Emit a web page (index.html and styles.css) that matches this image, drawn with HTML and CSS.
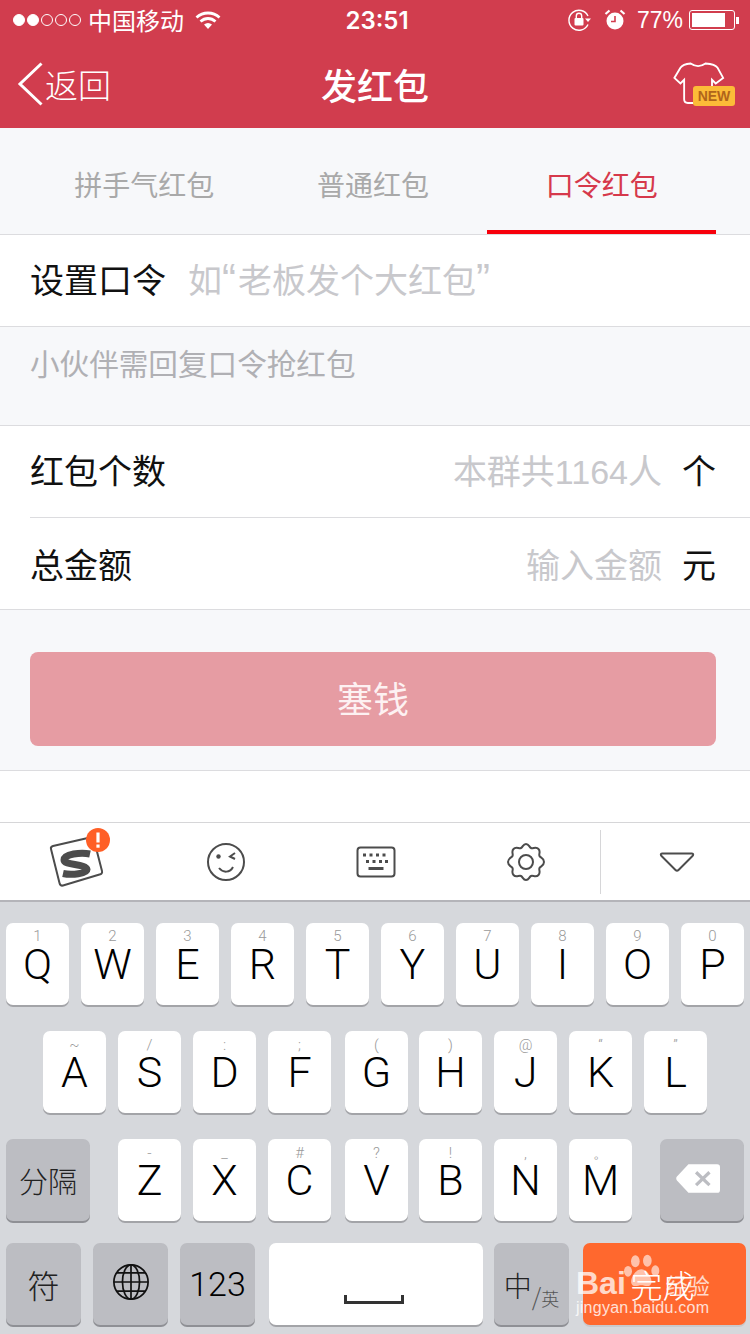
FILE: index.html
```html
<!DOCTYPE html>
<html>
<head>
    <meta charset="utf-8">
    <title>发红包</title>
    <link rel="stylesheet" href="styles.css">
</head>
<body>
<div id="phone">

    <div class="header">
        <div class="status">
            <div class="status-left">
                <span class="dot on"></span><span class="dot on"></span><span class="dot"></span><span class="dot"></span><span class="dot"></span>
                <span class="carrier">中国移动</span>
                <svg class="wifi" width="26" height="20" viewBox="0 0 26 20"><path d="M1.500 7.500C8 1.500 18 1.500 24.500 7.500" fill="none" stroke="#fff" stroke-width="2.800"/><path d="M5.500 11.500C10 7.500 16 7.500 20.500 11.500" fill="none" stroke="#fff" stroke-width="2.800"/><path d="M9 14.500C11.500 12.500 14.500 12.500 17 14.500L13 19Z" fill="#fff"/></svg>
            </div>
            <div class="clock">23:51</div>
            <div class="status-right">
                <svg width="24" height="22" viewBox="0 0 24 22"><path d="M20 15.500A10 10 0 1 1 20 7" fill="none" stroke="#fff" stroke-width="1.400"/><path d="M17 9.500h6l-3 3.500z" fill="#fff"/><rect x="6.500" y="9" width="9" height="7.500" rx="1" fill="#fff"/><path d="M8.300 9V7a2.700 2.700 0 0 1 5.400 0v2" fill="none" stroke="#fff" stroke-width="1.400"/></svg>
                <svg class="alarm" width="22" height="22" viewBox="0 0 22 22"><circle cx="11" cy="12" r="8.500" fill="#fff"/><path d="M11 7v5.500H7" fill="none" stroke="#d13d4e" stroke-width="1.600"/><path d="M1.500 5L5.500 1.500M20.500 5L16.500 1.500" stroke="#fff" stroke-width="2.200"/></svg>
                <span class="percent">77%</span>
                <div class="battery"><div class="battery-fill"></div></div>
                <div class="battery-tip"></div>
            </div>
        </div>
        <div class="nav">
            <div class="back">
                <svg width="28" height="44" viewBox="0 0 28 44"><path d="M24.500 1.500L3 22l21.500 20.500" fill="none" stroke="#fff" stroke-width="3"/></svg>
                <span>返回</span>
            </div>
            <div class="nav-title">发红包</div>
            <div class="skin">
                <svg class="shirt" width="52" height="43" viewBox="0 0 56 46"><path d="M19 1.500C24 5 30 5 35 1.500C41 2 46 3 48 6L54 17L46 23L42 19V44H16C13 44 12 43 12 40V19L8 23L1.500 17L8 6C10 3 14 2 19 1.500Z" fill="none" stroke="#fff" stroke-width="2"/></svg>
                <span class="new-tag">NEW</span>
            </div>
        </div>
    </div>

    <div class="tabs">
        <div class="tab">拼手气红包</div>
        <div class="tab">普通红包</div>
        <div class="tab active">口令红包</div>
    </div>

    <div class="row">
        <span class="row-label">设置口令</span>
        <span class="ph">如<span class="q">“</span>老板发个大红包<span class="q">”</span></span>
    </div>
    <div class="hint">小伙伴需回复口令抢红包</div>

    <div class="group">
        <div class="row inner">
            <span class="row-label">红包个数</span>
            <span class="ph right">本群共1164人</span>
            <span class="unit">个</span>
        </div>
        <div class="row last">
            <span class="row-label">总金额</span>
            <span class="ph right">输入金额</span>
            <span class="unit">元</span>
        </div>
    </div>

    <div class="btn-area"><div class="btn">塞钱</div></div>
    <div class="blank"></div>

    <div class="toolbar">
        <div class="tool tool-logo">
            <svg width="64" height="60" viewBox="0 0 64 60"><path d="M4 19L41 10.500C43 10 44.500 11 45 13L53 44C53.500 46 52.500 47 50.500 47.500L14 58.500C12 59 11 58 10.500 56L2 22C1.500 20.500 2.500 19.500 4 19Z" fill="#fff" stroke="#4c4c4c" stroke-width="2"/><path d="M41 27C32 25 15 27 15 33C15 38.500 37 36.500 38 42.500C38 46.500 23 48.500 14 46.500" fill="none" stroke="#4c4c4c" stroke-width="7"/><circle cx="49" cy="13" r="12" fill="#ff5f26"/><rect x="47.400" y="5.500" width="3.200" height="10" fill="#fff"/><rect x="47.400" y="17.500" width="3.200" height="3.200" fill="#fff"/></svg>
        </div>
        <div class="tool">
            <svg width="40" height="40" viewBox="0 0 40 40"><circle cx="20" cy="20" r="18" fill="none" stroke="#4c4c4c" stroke-width="2"/><circle cx="12.500" cy="14.500" r="2.200" fill="#4c4c4c"/><path d="M29 11L24 14.500L29 17" fill="none" stroke="#4c4c4c" stroke-width="2"/><path d="M13 26C17 31 24 31 27 25" fill="none" stroke="#4c4c4c" stroke-width="2"/></svg>
        </div>
        <div class="tool">
            <svg width="40" height="32" viewBox="0 0 40 32"><rect x="1.500" y="1.500" width="37" height="29" rx="3" fill="none" stroke="#4c4c4c" stroke-width="2"/><path d="M7 9h3M13.500 9h3M20 9h3M26.500 9h3M10 15.500h3M16.500 15.500h3M23 15.500h3M29 15.500h3" stroke="#4c4c4c" stroke-width="3"/><path d="M12.500 22.500h15" stroke="#4c4c4c" stroke-width="3"/></svg>
        </div>
        <div class="tool">
            <svg width="40" height="40" viewBox="0 0 40 40"><path d="M20 2C23 2 23 5 25 6C27 7 30 4 32.500 7C35 9.500 32.500 12 33.500 14C34.500 16 38 16 38 20C38 24 34.500 24 33.500 26C32.500 28 35 30.500 32.500 33C30 36 27 33 25 34C23 35 23 38 20 38C17 38 17 35 15 34C13 33 10 36 7.500 33C5 30.500 7.500 28 6.500 26C5.500 24 2 24 2 20C2 16 5.500 16 6.500 14C7.500 12 5 9.500 7.500 7C10 4 13 7 15 6C17 5 17 2 20 2Z" fill="none" stroke="#4c4c4c" stroke-width="2"/><circle cx="20" cy="20" r="7" fill="none" stroke="#4c4c4c" stroke-width="2"/></svg>
        </div>
        <div class="tool tool-last">
            <svg width="36" height="22" viewBox="0 0 36 22"><path d="M3 2.500H33C34.500 2.500 34.500 4 33.500 5L19.500 19C18.500 20 17.500 20 16.500 19L2.500 5C1.500 4 1.500 2.500 3 2.500Z" fill="none" stroke="#4c4c4c" stroke-width="2"/></svg>
        </div>
    </div>

    <div class="keyboard">
        <div class="key-row row-a">
            <div class="key"><small>1</small>Q</div>
            <div class="key"><small>2</small>W</div>
            <div class="key"><small>3</small>E</div>
            <div class="key"><small>4</small>R</div>
            <div class="key"><small>5</small>T</div>
            <div class="key"><small>6</small>Y</div>
            <div class="key"><small>7</small>U</div>
            <div class="key"><small>8</small>I</div>
            <div class="key"><small>9</small>O</div>
            <div class="key"><small>0</small>P</div>
        </div>
        <div class="key-row row-b">
            <div class="key"><small>~</small>A</div>
            <div class="key"><small>/</small>S</div>
            <div class="key"><small>:</small>D</div>
            <div class="key"><small>;</small>F</div>
            <div class="key nudge-r"><small>(</small>G</div>
            <div class="key nudge-l"><small>)</small>H</div>
            <div class="key"><small>@</small>J</div>
            <div class="key"><small>“</small>K</div>
            <div class="key"><small>”</small>L</div>
        </div>
        <div class="key-row row-c">
            <div class="key dark wide cjk">分隔</div>
            <div class="letters">
                <div class="key"><small>-</small>Z</div>
                <div class="key"><small>_</small>X</div>
                <div class="key"><small>#</small>C</div>
                <div class="key nudge-r"><small>?</small>V</div>
                <div class="key nudge-l"><small>!</small>B</div>
                <div class="key"><small>,</small>N</div>
                <div class="key"><small>。</small>M</div>
            </div>
            <div class="key dark wide del">
                <svg width="44" height="31" viewBox="0 0 46 32"><path d="M13 1H43C45 1 46 2 46 4V28C46 30 45 31 43 31H13L1 18C0 17 0 15 1 14Z" fill="#fff"/><path d="M21 9.500L35 23M35 9.500L21 23" stroke="#bcbdc2" stroke-width="3.400"/></svg>
            </div>
        </div>
        <div class="key-row row-d">
            <div class="key dark fn cjk sym">符</div>
            <div class="key dark fn">
                <svg class="globe" width="38" height="38" viewBox="0 0 40 40" fill="none" stroke="#111" stroke-width="1.800"><circle cx="20" cy="20" r="18"/><ellipse cx="20" cy="20" rx="9" ry="18"/><path d="M20 2V38M2 20H38M5 10.500H35M5 29.500H35"/></svg>
            </div>
            <div class="key dark fn num">123</div>
            <div class="key space"><div class="space-mark"></div></div>
            <div class="key dark fn cn"><span class="cn-big">中</span><span class="cn-small"><i>/</i>英</span></div>
            <div class="key send">完成</div>
        </div>
    </div>

    <div class="watermark">
        <svg class="paw" width="40" height="38" viewBox="0 0 60 56" fill="#fff" opacity="0.6"><ellipse cx="20" cy="12" rx="6.500" ry="9"/><ellipse cx="38" cy="11" rx="6.500" ry="9"/><ellipse cx="9" cy="27" rx="6" ry="8"/><ellipse cx="50" cy="26" rx="6" ry="8"/><path d="M29 24C38 24 46 38 44 45C42 52 34 48 29 48C24 48 16 52 14 45C12 38 20 24 29 24Z"/></svg>
        <div class="wm-line">Bai<span class="wm-cn">经验</span></div>
        <div class="wm-url">jingyan.baidu.com</div>
    </div>

</div>
</body>
</html>
```

FILE: styles.css
```css
* {
  box-sizing: border-box;
}

body {
  margin: 0;
  padding: 0;
  background: #fff;
  font-family: "Noto Sans CJK SC", "Liberation Sans", sans-serif;
}

#phone {
  position: relative;
  width: 750px;
  height: 1334px;
  overflow: hidden;
  background: #fff;
}

.header {
  height: 128px;
  background-color: #d13d4e;
  color: #fff;
}

.status {
  height: 40px;
  padding: 0 11px 0 13px;
  display: flex;
  align-items: center;
  justify-content: space-between;
}

.status-left, .status-right {
  width: 280px;
  display: flex;
  align-items: center;
}

.status-right {
  justify-content: flex-end;
}

.dot {
  width: 12px;
  height: 12px;
  margin-right: 2px;
  border: 1px solid #fff;
  border-radius: 50%;
}

.dot.on {
  background: #fff;
}

.carrier {
  margin-left: 5px;
  font-size: 24px;
  line-height: 40px;
}

.wifi {
  margin-left: 11px;
}

.clock {
  margin-left: 2px;
  font-family: "Inter", "Liberation Sans", sans-serif;
  font-size: 24px;
  font-weight: 600;
}

.alarm {
  margin-left: 12px;
}

.percent {
  margin-left: 11px;
  font-family: "Liberation Sans", sans-serif;
  font-size: 23px;
}

.battery {
  width: 46px;
  height: 20px;
  margin-left: 6px;
  padding: 2px;
  border: 1px solid #fff;
  border-radius: 3px;
}

.battery-fill {
  width: 33px;
  height: 14px;
  background: #fff;
}

.battery-tip {
  width: 3px;
  height: 7px;
  margin-left: 1px;
  background: #fff;
}

.nav {
  height: 88px;
  padding: 0 15px;
  display: flex;
  align-items: center;
  justify-content: space-between;
}

.back {
  width: 200px;
  padding-left: 2px;
  display: flex;
  align-items: center;
  font-size: 33px;
  font-weight: 300;
}

.nav-title {
  font-size: 36px;
  font-weight: 500;
}

.skin {
  position: relative;
  width: 200px;
  height: 46px;
  padding: 1px 10px 0 0;
}

.shirt {
  display: block;
  margin-left: auto;
}

.new-tag {
  position: absolute;
  right: 0;
  bottom: 1px;
  width: 42px;
  height: 20px;
  background: #fcbc38;
  border-radius: 3px;
  color: #b0651b;
  font-family: "Liberation Sans", sans-serif;
  font-size: 14px;
  font-weight: bold;
  line-height: 20px;
  text-align: center;
}

.tabs {
  height: 107px;
  padding: 0 34px 0 30px;
  display: flex;
  background: #f7f8fa;
  border-bottom: 1px solid #dcdcdf;
}

.tab {
  flex: 1;
  height: 106px;
  font-size: 28px;
  line-height: 113px;
  text-align: center;
  color: #a9a9a9;
}

.tab.active {
  color: #d6394b;
  border-bottom: 4px solid #f7000b;
}

.row {
  height: 92px;
  padding: 0 34px 4px 30px;
  display: flex;
  align-items: center;
  background: #fff;
  border-bottom: 1px solid #dcdcdf;
}

.row-label {
  font-size: 34px;
  color: #111;
}

.ph {
  margin-left: 22px;
  font-family: "Liberation Sans", "Noto Sans CJK SC", sans-serif;
  font-size: 34px;
  color: #c8c8cc;
}

.ph.right {
  margin-left: auto;
}

.q {
  font-size: 42px;
  letter-spacing: 2px;
  line-height: 0;
}

.unit {
  width: 34px;
  margin-left: 20px;
  font-size: 34px;
  color: #111;
}

.hint {
  height: 99px;
  padding: 14px 30px 0;
  font-size: 29.6px;
  color: #b0b0b4;
  background: #f7f8fa;
  border-bottom: 1px solid #dcdcdf;
}

.group {
  background: #fff;
  border-bottom: 1px solid #dcdcdf;
}

.row.inner {
  margin-left: 30px;
  padding-left: 0;
}

.row.last {
  height: 91px;
  padding-bottom: 0;
  border-bottom: none;
}

.btn-area {
  height: 161px;
  padding: 42px 34px 0 30px;
  background: #f7f8fa;
  border-bottom: 1px solid #dcdcdf;
}

.btn {
  height: 94px;
  background: #e69ca3;
  border-radius: 8px;
  color: #fdf1f2;
  font-size: 36px;
  line-height: 91px;
  text-align: center;
}

.blank {
  height: 51px;
  background: #fff;
}

.toolbar {
  height: 80px;
  display: flex;
  align-items: center;
  background: #fff;
  border-top: 1px solid #d6d6d8;
  border-bottom: 2px solid #b4b4b9;
}

.tool {
  width: 150px;
  height: 64px;
  padding-left: 2px;
  display: flex;
  align-items: center;
  justify-content: center;
}

.tool-logo svg {
  margin: 0 0 10px 10px;
}

.tool-last {
  border-left: 1px solid #d6d6d8;
}

.keyboard {
  height: 432px;
  padding-top: 21px;
  background: #d6d8dc;
}

.key-row {
  display: flex;
}

.row-a {
  height: 108px;
  padding: 0 6px;
  gap: 12px;
}

.row-b {
  height: 108px;
  padding: 0 43px;
  gap: 12px;
}

.row-c {
  height: 104px;
  padding: 0 6px;
  gap: 28px;
}

.row-d {
  padding: 0 4px 0 6px;
  gap: 12px;
}

.letters {
  display: flex;
  gap: 12px;
}

.key {
  position: relative;
  width: 63px;
  height: 82px;
  padding-top: 4px;
  background: #fff;
  border-radius: 7px;
  box-shadow: 0 2px 0 #a3a4a8;
  font-family: "Roboto", "Liberation Sans", sans-serif;
  font-size: 43px;
  font-weight: 300;
  line-height: 38px;
  text-align: center;
  color: #000;
}

.key small {
  display: block;
  font-size: 15px;
  font-weight: 300;
  line-height: 18px;
  color: #9a9a9a;
}

.row-b .key small, .row-c .key small {
  margin-top: 1px;
  margin-bottom: -1px;
}

.nudge-r {
  margin-left: 2px;
}

.nudge-l {
  margin-left: -1px;
}

.key.dark {
  padding-top: 0;
  background: #bcbdc2;
  box-shadow: 0 2px 0 #8f9095;
  line-height: 80px;
}

.key.wide {
  width: 84px;
  display: flex;
  align-items: center;
  justify-content: center;
}

.del svg {
  margin: 0 8px 3px 0;
}

.key.cjk {
  font-family: "Noto Sans CJK SC", sans-serif;
  font-size: 29px;
  color: #222;
}

.key.sym {
  font-size: 32px;
}

.key.fn {
  width: 75px;
  display: flex;
  align-items: center;
  justify-content: center;
}

.globe {
  margin-bottom: 4px;
}

.key.num {
  font-size: 34px;
}

.key.space {
  width: 214px;
  margin-left: 2px;
}

.space-mark {
  position: absolute;
  left: 75px;
  bottom: 21px;
  width: 60px;
  height: 9px;
  border: 3px solid #333;
  border-top: none;
}

.key.cn {
  margin-left: -1px;
  align-items: flex-start;
  padding-top: 22px;
  font-family: "Noto Sans CJK SC", sans-serif;
  line-height: normal;
}

.cn-big {
  font-size: 28px;
  color: #222;
}

.cn-small {
  margin-top: 13px;
  font-size: 18px;
  color: #555;
}

.cn-small i {
  font-size: 24px;
  font-style: normal;
}

.key.send {
  width: 163px;
  margin-left: 2px;
  padding: 0 4px 0 0;
  background: #ff682e;
  box-shadow: 0 2px 0 #c9c9cc;
  font-family: "Noto Sans CJK SC", sans-serif;
  font-size: 32px;
  line-height: 82px;
  color: #fff;
}

.watermark {
  position: absolute;
  left: 576px;
  top: 1252px;
  width: 140px;
  color: #fff;
  font-family: "Liberation Sans", sans-serif;
}

.paw {
  position: absolute;
  left: 46px;
  top: 1px;
}

.wm-line {
  position: absolute;
  top: 13px;
  left: 0;
  font-size: 32px;
  font-weight: bold;
  white-space: nowrap;
  opacity: 0.75;
}

.wm-cn {
  margin-left: 40px;
  font-family: "Noto Sans CJK SC", sans-serif;
  font-size: 22px;
  font-weight: normal;
}

.wm-url {
  position: absolute;
  top: 47px;
  left: 0;
  font-size: 16px;
  letter-spacing: 0.25px;
  white-space: nowrap;
  opacity: 0.8;
}
```
